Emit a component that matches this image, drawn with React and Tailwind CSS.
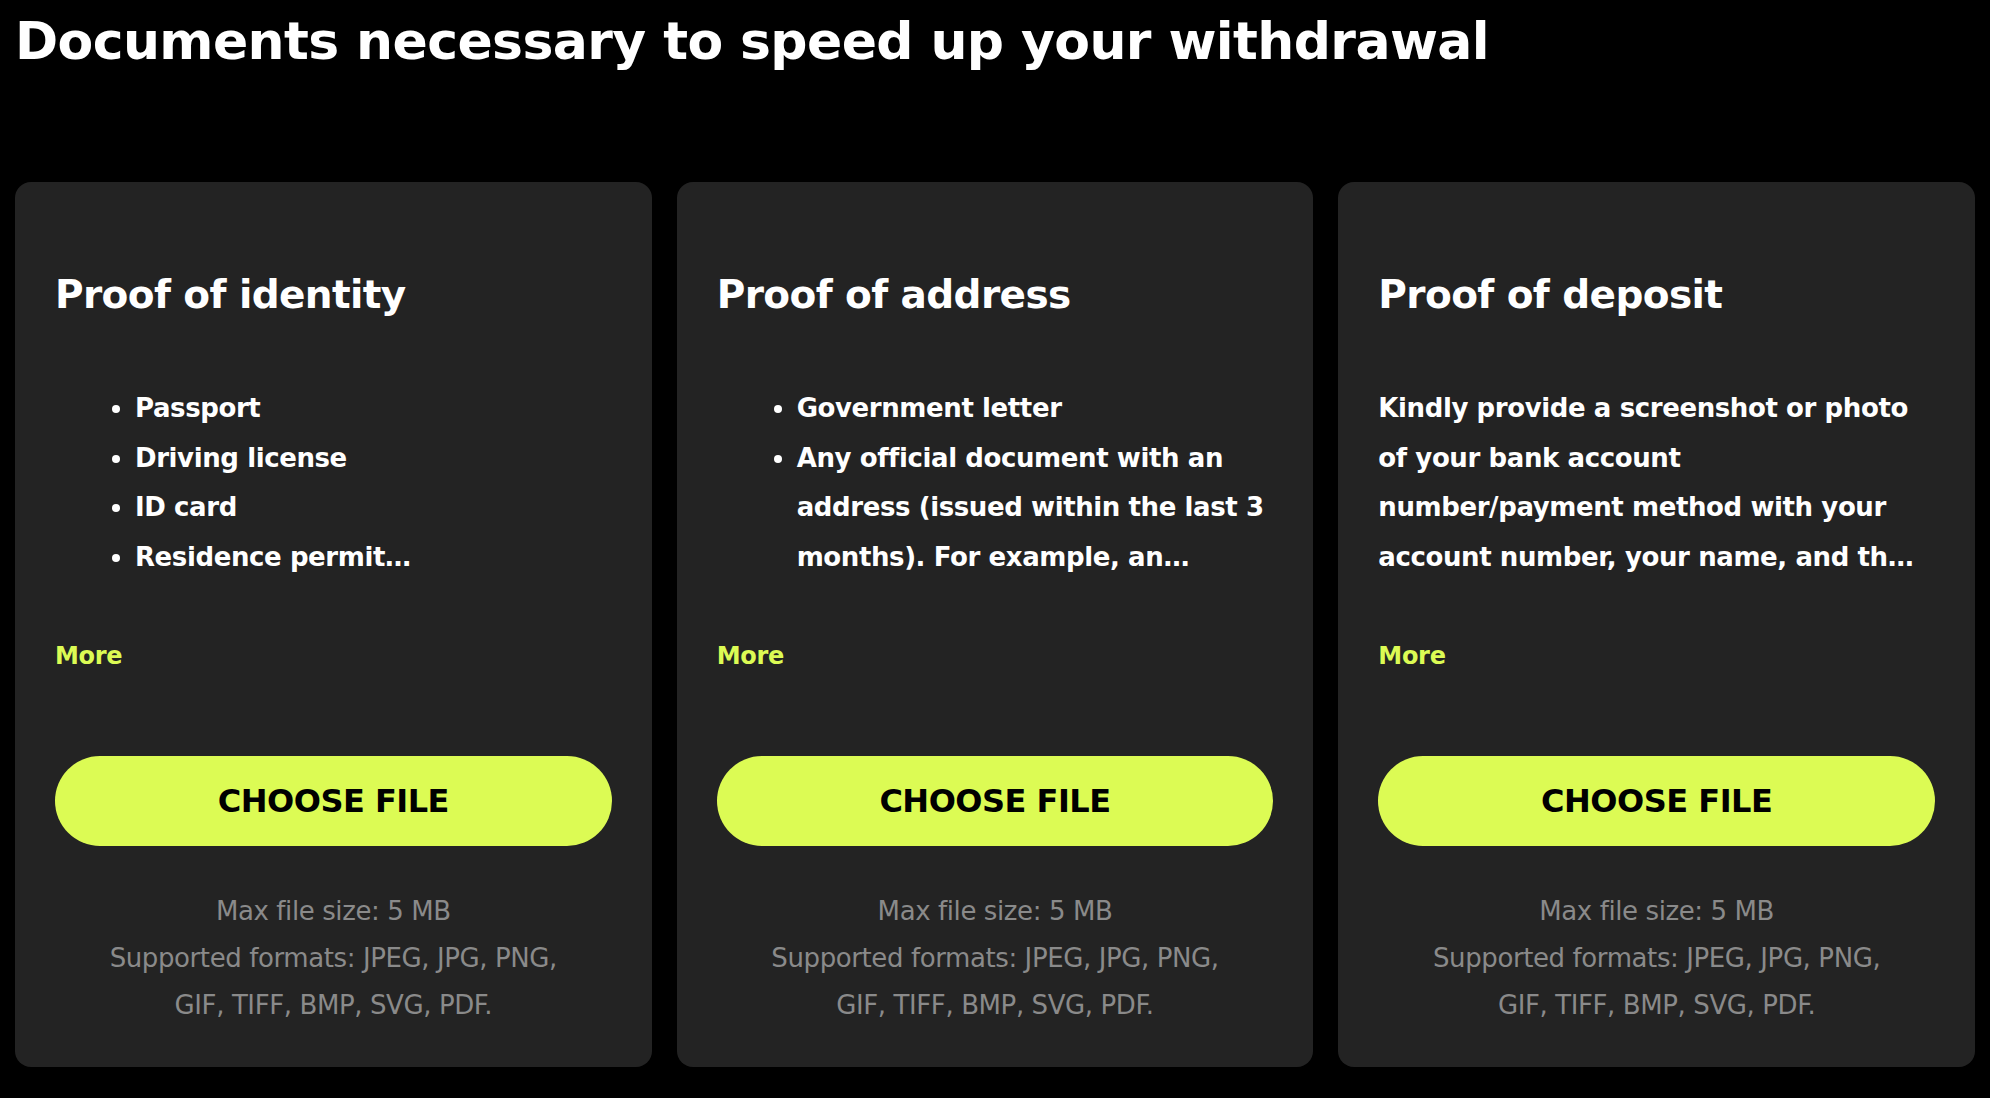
import React from "react";

const cards = [
  {
    title: "Proof of identity",
    items: [
      "Passport",
      "Driving license",
      "ID card",
      "Residence permit",
      "Any other government-issued document with a photo",
    ],
  },
  {
    title: "Proof of address",
    items: [
      "Government letter",
      "Any official document with an address (issued within the last 3 months). For example, an electricity bill, a bank statement",
    ],
  },
  {
    title: "Proof of deposit",
    text: "Kindly provide a screenshot or photo of your bank account number/payment method with your account number, your name, and the date of the transaction visible",
  },
];

const Card = ({ card }) => {
  return (
    <div className="flex flex-col rounded-2xl bg-[#232323] px-10 pt-[84px] pb-[38px]">
      <h2 className="text-[39px] font-bold leading-[57px] tracking-[-0.6px] text-white">
        {card.title}
      </h2>

      <div className="mt-[61px] h-[199px]">
        {card.items ? (
          <ul className="line-clamp-4 list-disc pl-[80px] text-[26px] font-bold leading-[49.7px] tracking-[-0.4px] text-white">
            {card.items.map((item) => (
              <li key={item}>{item}</li>
            ))}
          </ul>
        ) : (
          <p className="line-clamp-4 pr-[14px] text-[26px] font-bold leading-[49.7px] tracking-[-0.4px] text-white">
            {card.text}
          </p>
        )}
      </div>

      <button className="mt-[54px] self-start text-[24px] font-bold leading-[39px] tracking-[-0.3px] text-[#dcfb54]">
        More
      </button>

      <button className="mt-[80px] h-[90px] w-full rounded-full bg-[#dcfb54] text-[32px] font-bold tracking-[-0.5px] text-black">
        CHOOSE FILE
      </button>

      <div className="mt-[42px] px-[30px] text-center text-[26px] leading-[47px] tracking-[-0.4px] text-[#8a8a8a]">
        <p>Max file size: 5 MB</p>
        <p>Supported formats: JPEG, JPG, PNG, GIF, TIFF, BMP, SVG, PDF.</p>
      </div>
    </div>
  );
};

export default function App() {
  return (
    <div className="min-h-screen bg-black px-[15px] pt-[10px] pb-8 font-['DejaVu_Sans',sans-serif]">
      <h1 className="text-[52px] font-bold leading-[62px] tracking-[-0.6px] text-white">
        Documents necessary to speed up your withdrawal
      </h1>
      <div className="mt-[110px] grid grid-cols-3 gap-[25px]">
        {cards.map((card) => (
          <Card key={card.title} card={card} />
        ))}
      </div>
    </div>
  );
}
